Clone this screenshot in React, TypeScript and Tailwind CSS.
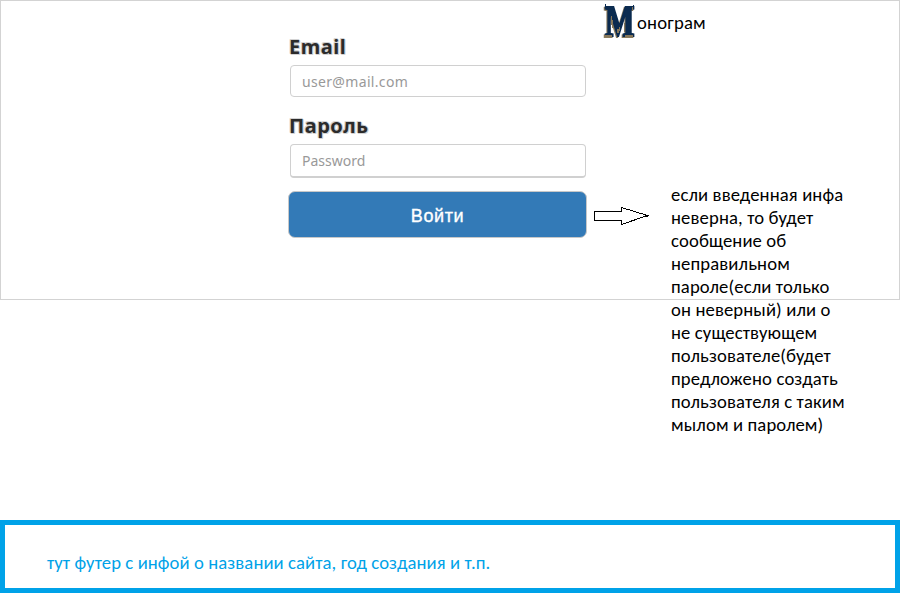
const noteLines = [
  'если введенная инфа',
  'неверна, то будет',
  'сообщение об',
  'неправильном',
  'пароле(если только',
  'он неверный) или о',
  'не существующем',
  'пользователе(будет',
  'предложено создать',
  'пользователя с таким',
  'мылом и паролем)',
];

function Arrow() {
  return (
    <svg width="57" height="20" viewBox="0 0 57 20" className="block" shapeRendering="crispEdges">
      <path d="M1.5 5.5H28.5V1.5L54.5 9.5L28.5 18.5V14.5H1.5Z" fill="#fff" stroke="#000" />
      <path d="M52 10H55" stroke="#000" strokeWidth="2" />
    </svg>
  );
}

function Brand() {
  return (
    <div className="flex h-[39px] items-start text-black">
      <svg width="34" height="39" viewBox="0 0 34 39" className="block overflow-visible">
        <text x="3" y="34.5" fontFamily="Liberation Serif, serif" fontWeight="700" fontSize="44" textLength="29.5" lengthAdjust="spacingAndGlyphs" fill="#0b2b50" stroke="#0b2b50" strokeWidth="2.2" className="[filter:drop-shadow(-1px_1px_0_#8b7b5c)]">M</text>
        <g fill="#85765a" shapeRendering="crispEdges">
          <path d="M2 34h8v2h-8zM23 34h8v2h-8zM9 15h1v9h-1zM10 19h1v8h-1zM15 28h2v4h-2zM17 26h1v4h-1zM22 22h1v9h-1zM30 6h1v4h-1z" />
        </g>
        <path d="M3 3h1v2h-1zM31 4h1v2h-1z" fill="#0b2b50" shapeRendering="crispEdges" />
      </svg>
      <span className="mt-[10px] ml-px text-[18.67px] leading-[23px] tracking-[0.2px]">онограм</span>
    </div>
  );
}

const label =
  "block font-['Noto_Sans',sans-serif] text-[20px] font-bold leading-[24px] tracking-[0.5px] text-[#2b2b2b] [text-shadow:1px_0_#d3d3d3,-1px_0_#d3d3d3,0_1px_#d3d3d3,0_-1px_#d3d3d3,1px_1px_#d3d3d3,-1px_-1px_#d3d3d3]";
const field =
  "block w-[296px] rounded-[4px] border border-[#d0d0d0] bg-white px-[11px] font-['Noto_Sans',sans-serif] text-[14px] text-[#555] outline-none placeholder:text-[#999] placeholder:opacity-100";

export default function App() {
  return (
    <div className="flex h-[593px] w-[900px] flex-col justify-between overflow-hidden bg-white font-['Carlito','Lato','Open_Sans',sans-serif]">
      <main className="flex h-[300px] border border-[#d3d3d3]">
        <form className="ml-[287px] flex w-[299px] flex-col pt-[34px]" onSubmit={(e) => e.preventDefault()}>
          <label htmlFor="email" className={`${label} ml-px`}>Email</label>
          <input id="email" type="email" placeholder="user@mail.com" className={`${field} mt-[6px] ml-[2px] h-[32px] tracking-[0.33px]`} />
          <label htmlFor="password" className={`${label} mt-[17px] ml-px`}>Пароль</label>
          <input id="password" type="password" placeholder="Password" className={`${field} mt-[6px] ml-[2px] h-[34px] border-b-2`} />
          <button className="mt-[13px] h-[47px] w-[299px] rounded-[7px] border border-[#c8c8c8] bg-[#337ab7] pt-[4px] font-['Liberation_Sans',sans-serif] text-[18px] tracking-[0.6px] text-white [-webkit-text-stroke:0.35px_white]">Войти</button>
        </form>
        <div className="ml-[6px] flex w-[260px] flex-col">
          <div className="ml-[9px]"><Brand /></div>
          <div className="mt-[143px] flex items-start">
            <div className="mt-[23px]"><Arrow /></div>
            <div className="ml-[21px] text-[18.67px] leading-[23px] tracking-[0.12px] whitespace-nowrap text-black">
              {noteLines.map((line) => <div key={line}>{line}</div>)}
            </div>
          </div>
        </div>
      </main>
      <footer className="flex h-[73px] items-start border-[5px] border-[#00a2e8] pt-[26px] pl-[42px] text-[18.67px] leading-[23px] tracking-[0.09px] text-[#00a2e8]">
        тут футер с инфой о названии сайта, год создания и т.п.
      </footer>
    </div>
  );
}
